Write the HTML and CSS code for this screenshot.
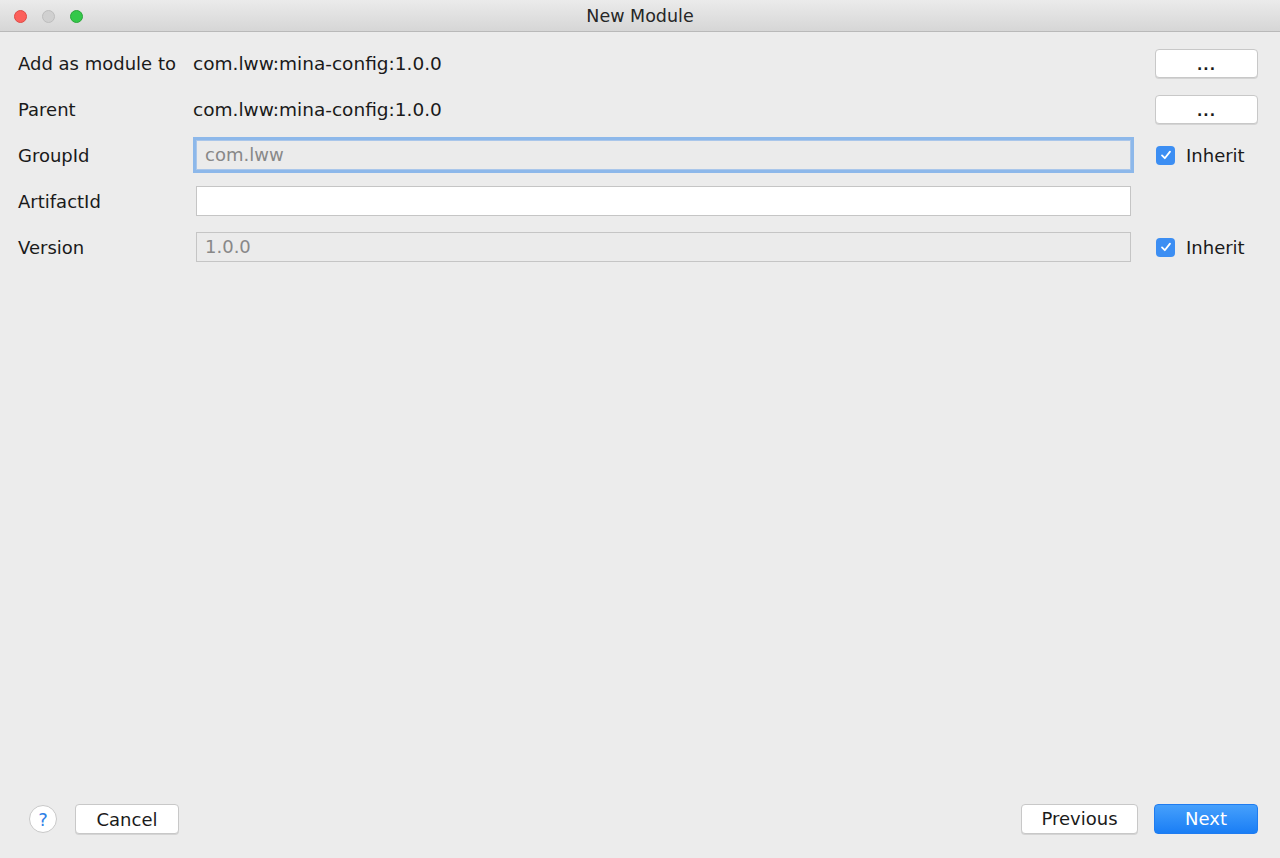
FILE: index.html
```html
<!DOCTYPE html>
<html lang="en">
<head>
    <meta charset="UTF-8">
    <title>New Module</title>
    <link rel="stylesheet" href="styles.css">
</head>
<body>
<div class="window">
    <div class="titlebar">
        <div class="lights">
            <span class="light red"></span>
            <span class="light gray"></span>
            <span class="light green"></span>
        </div>
        <div class="title">New Module</div>
    </div>
    <div class="content">
        <div class="form">
            <label>Add as module to</label>
            <div class="value">com.lww:mina-config:1.0.0</div>
            <button class="btn dots">...</button>

            <label>Parent</label>
            <div class="value">com.lww:mina-config:1.0.0</div>
            <button class="btn dots">...</button>

            <label>GroupId</label>
            <div class="field disabled focused">com.lww</div>
            <div class="check"><span class="box"><svg width="14" height="14" viewBox="0 0 14 14"><path d="M3 7.4 L5.8 10.2 L11 3.6" fill="none" stroke="#fff" stroke-width="1.8" stroke-linecap="round" stroke-linejoin="round"/></svg></span>Inherit</div>

            <label>ArtifactId</label>
            <div class="field"></div>
            <div></div>

            <label>Version</label>
            <div class="field disabled">1.0.0</div>
            <div class="check"><span class="box"><svg width="14" height="14" viewBox="0 0 14 14"><path d="M3 7.4 L5.8 10.2 L11 3.6" fill="none" stroke="#fff" stroke-width="1.8" stroke-linecap="round" stroke-linejoin="round"/></svg></span>Inherit</div>
        </div>
        <div class="footer">
            <div class="left">
                <span class="help">?</span>
                <button class="btn cancel">Cancel</button>
            </div>
            <div class="right">
                <button class="btn prev">Previous</button>
                <button class="btn primary">Next</button>
            </div>
        </div>
    </div>
</div>
</body>
</html>
```

FILE: styles.css
```css
html, body { margin: 0; padding: 0; }
body { font-family: "DejaVu Sans", "Liberation Sans", sans-serif; font-size: 18px; color: #1a1a1a; background: #ececec; }
.window { width: 1280px; height: 858px; display: flex; flex-direction: column; background: #ececec; }

/* title bar */
.titlebar { height: 31px; position: relative; display: flex; align-items: center; justify-content: center;
    background: linear-gradient(#ebebeb, #d6d6d6); border-bottom: 1px solid #b9b9b9; }
.lights { position: absolute; left: 14px; top: 10px; display: flex; gap: 15px; }
.light { width: 13px; height: 13px; border-radius: 50%; box-sizing: border-box; }
.red { background: #fc605b; border: 1px solid #de4a45; }
.gray { background: #d0d0d0; border: 1px solid #bdbdbd; }
.green { background: #34c84a; border: 1px solid #2aa63a; }
.title { font-size: 17.5px; color: #262626; padding-top: 1px; }

.content { flex: 1; display: flex; flex-direction: column; justify-content: space-between; padding: 8px 22px 24px 18px; }

/* form grid */
.form { display: grid; grid-template-columns: 154px 941px 103px; column-gap: 21px; grid-auto-rows: 46px; align-items: center; }
.form label { white-space: nowrap; }
.value { white-space: nowrap; font-size: 18.5px; }
.field { height: 30px; margin: 0 3px; box-sizing: border-box; border: 1px solid #c5c5c5; background: #fff;
    padding: 0 8px; line-height: 28px; color: #888; }
.field.disabled { background: #ebebeb; }
.field.focused { box-shadow: 0 0 0 3px #8db8ea; border-color: #a9c6ea; }
.check { display: flex; align-items: center; gap: 11px; margin-left: 1px; white-space: nowrap; }
.box { width: 19px; height: 19px; border-radius: 4px; background: #3c8ef3; display: flex; align-items: center; justify-content: center; }

/* buttons */
.btn { font-family: inherit; font-size: 18px; color: #1a1a1a; background: #fff; border: 1px solid #c8c8c8;
    border-radius: 4px; height: 30px; padding: 0; box-shadow: 0 1px 0 #d4d4d4; }
.dots { width: 103px; height: 29px; font-size: 14px; font-weight: bold; letter-spacing: 1px; padding-top: 4px; }

.footer { display: flex; justify-content: space-between; align-items: center; }
.left, .right { display: flex; align-items: center; }
.help { width: 28px; height: 28px; border-radius: 50%; box-sizing: border-box; border: 1px solid #c8c8c8; background: #fff;
    color: #2f80e6; font-size: 18px; display: flex; align-items: center; justify-content: center;
    margin-left: 11px; margin-right: 18px; margin-top: 1px; }
.cancel { width: 104px; margin-top: 1px; }
.prev { width: 117px; margin-right: 16px; }
.primary { width: 104px; color: #fff; border-color: #1f7cf0; background: linear-gradient(#46a0fc, #1a7ef5); box-shadow: none; }
```
